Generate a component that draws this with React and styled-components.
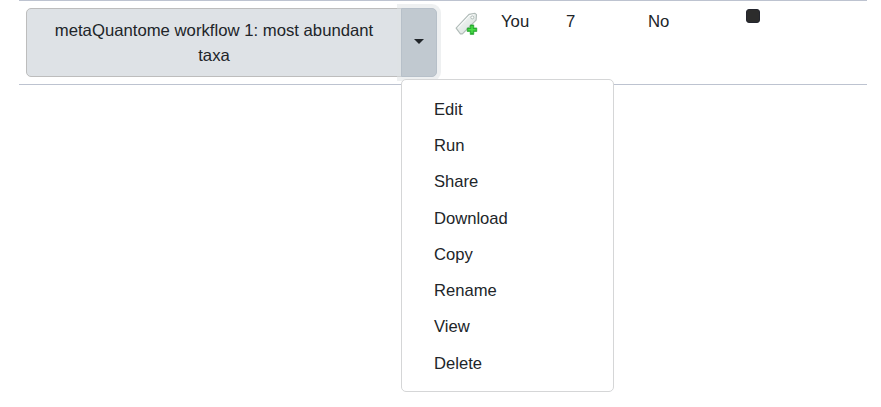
import React from "react";
import styled, { createGlobalStyle } from "styled-components";

const GlobalStyle = createGlobalStyle`
  *, *::before, *::after { box-sizing: border-box; }
  body {
    margin: 0;
    background: #fff;
    color: #212529;
    font: 16.72px/25px "Liberation Sans", Arial, sans-serif;
  }
`;

const Page = styled.main`
  min-height: 100vh;
  padding: 0 14px 0 19px;
`;

const WorkflowRow = styled.div`
  display: grid;
  grid-template-columns: 430px 52px 65px 82px 98px 1fr;
  height: 85px;
  border: solid #bdc3d0;
  border-width: 1px 0;
`;

const Cell = styled.div`
  padding: ${({ $top = 8 }) => $top}px 0 0 ${({ $left = 0 }) => $left}px;
`;

const ButtonGroup = styled.div`
  position: relative;
  display: flex;
  width: 411px;
  height: 69px;
`;

const NameButton = styled.button`
  width: 376px;
  padding: 0 24px;
  border: 1px solid #bdbdbd;
  border-radius: 5px 0 0 5px;
  background: #dee2e6;
  color: inherit;
  font: inherit;
  text-align: center;
`;

const CaretButton = styled.button`
  display: flex;
  align-items: center;
  justify-content: center;
  width: 36px;
  margin-left: -1px;
  padding: 0;
  border: 1px solid #b7c0c9;
  border-radius: 0 5px 5px 0;
  background: #c1c9d0;
  box-shadow: 0 0 0 4px rgba(222, 225, 228, 0.5);
  z-index: 1;
`;

const Caret = styled.span`
  margin-top: -2px;
  border: 5px solid transparent;
  border-top-color: #212529;
  border-bottom: 0;
`;

const Menu = styled.ul`
  position: absolute;
  z-index: 2;
  top: 71px;
  left: 375px;
  width: 213px;
  height: 313px;
  margin: 0;
  padding: 11.38px 0;
  border: 1px solid #d5d6d7;
  border-radius: 5px;
  background: #fff;
  font-size: 16.6px;
  list-style: none;
`;

const MenuItem = styled.li`
  height: 36.25px;
  padding: 5.5px 32px;
`;

const Published = styled.input`
  display: block;
  appearance: none;
  width: 14px;
  height: 14px;
  margin: 0;
  border: 1px solid #23252e;
  border-radius: 3px;
  background: #2c2c2c;
`;

const TagSvg = styled.svg`
  display: block;
`;

const actions = ["Edit", "Run", "Share", "Download", "Copy", "Rename", "View", "Delete"];

function AddTagIcon() {
  return (
    <TagSvg width="23" height="24" viewBox="0 0 23 24" role="img" aria-label="Add tag">
      <defs>
        <linearGradient id="tagFill" x1="0" y1="0" x2="1" y2="1">
          <stop offset="0" stopColor="#f8faf9" />
          <stop offset="1" stopColor="#d5dedb" />
        </linearGradient>
      </defs>
      <path d="M1.1 16.2 14 2.4 20 1.4 21.5 2.7 21.1 8.2 7.4 21.9 5.4 21.9Z" fill="url(#tagFill)" stroke="#b0bbb8" strokeWidth="1.1" strokeLinejoin="round" />
      <path d="M3 15.8 14.6 3.6 19.5 2.7" fill="none" stroke="#fff" strokeWidth="1" />
      <circle cx="17.3" cy="5.4" r="1.5" fill="#fff" stroke="#a9b5b1" strokeWidth="0.9" />
      <path d="M15.2 12.9h3.6v3h3v3.6h-3v2.9h-3.6v-2.9h-3v-3.6h3Z" fill="#24b32b" stroke="#249f2b" strokeWidth="0.6" strokeLinejoin="round" />
      <path d="M17 14.1v7M13.3 17.7h7.4" stroke="#4bdd48" strokeWidth="1.5" />
    </TagSvg>
  );
}

export default function App() {
  return (
    <>
      <GlobalStyle />
      <Page>
        <WorkflowRow>
          <Cell $left={7} $top={7}>
            <ButtonGroup>
              <NameButton>metaQuantome workflow 1: most abundant taxa</NameButton>
              <CaretButton aria-label="Workflow actions" aria-expanded="true"><Caret /></CaretButton>
              <Menu>
                {actions.map((action) => <MenuItem key={action}>{action}</MenuItem>)}
              </Menu>
            </ButtonGroup>
          </Cell>
          <Cell $left={6} $top={11}><AddTagIcon /></Cell>
          <Cell>You</Cell>
          <Cell>7</Cell>
          <Cell>No</Cell>
          <Cell><Published type="checkbox" aria-label="Published" /></Cell>
        </WorkflowRow>
      </Page>
    </>
  );
}
